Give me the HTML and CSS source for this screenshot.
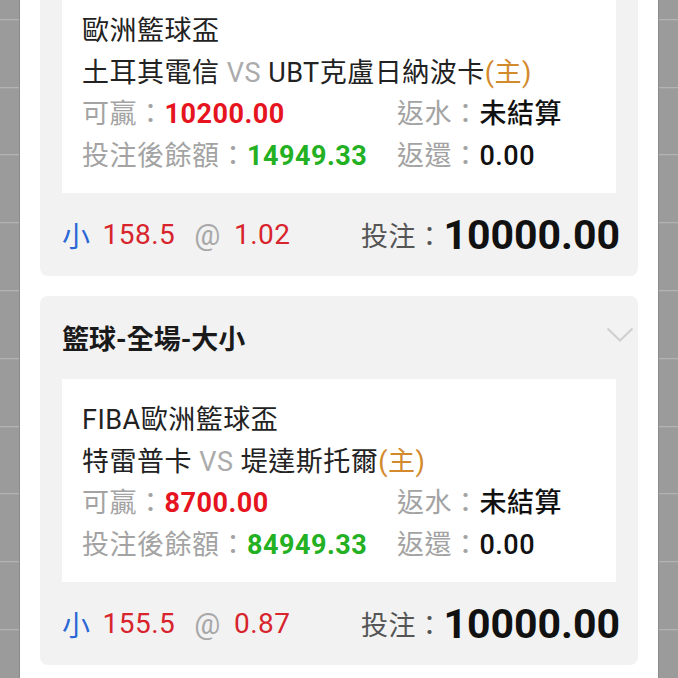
FILE: index.html
```html
<!DOCTYPE html>
<html>
<head>
    <meta charset="utf-8"/>
    <title>注單</title>
    <link rel="stylesheet" href="styles.css">
</head>
<body>
<div class="page">
    <div class="strip strip-left"></div>
    <div class="main">
        <div class="list">
            <div class="card">
                <div class="card-head">
                    <span class="title">籃球-全場-大小</span>
                    <svg class="arrow" width="28" height="16" viewBox="0 0 28 16"><polyline points="1.5,1.5 14,13.5 26.5,1.5" fill="none" stroke="#cfcfcf" stroke-width="2"/></svg>
                </div>
                <div class="detail">
                    <p>歐洲籃球盃</p>
                    <p>土耳其電信 <span class="vs">VS</span> UBT克盧日納波卡<span class="home">(主)</span></p>
                    <div class="stats">
                        <div><span class="label">可贏：</span><span class="win">10200.00</span></div>
                        <div><span class="label">返水：</span><span class="val">未結算</span></div>
                        <div><span class="label">投注後餘額：</span><span class="rest">14949.33</span></div>
                        <div><span class="label">返還：</span><span class="val">0.00</span></div>
                    </div>
                </div>
                <div class="bet">
                    <div class="odds">
                        <span class="pick">小</span><span class="num">158.5</span><span class="at">@</span><span class="num">1.02</span>
                    </div>
                    <div class="stake"><span class="stake-label">投注：</span><span class="stake-num">10000.00</span></div>
                </div>
            </div>
            <div class="card">
                <div class="card-head">
                    <span class="title">籃球-全場-大小</span>
                    <svg class="arrow" width="28" height="16" viewBox="0 0 28 16"><polyline points="1.5,1.5 14,13.5 26.5,1.5" fill="none" stroke="#cfcfcf" stroke-width="2"/></svg>
                </div>
                <div class="detail">
                    <p>FIBA歐洲籃球盃</p>
                    <p>特雷普卡 <span class="vs">VS</span> 堤達斯托爾<span class="home">(主)</span></p>
                    <div class="stats">
                        <div><span class="label">可贏：</span><span class="win">8700.00</span></div>
                        <div><span class="label">返水：</span><span class="val">未結算</span></div>
                        <div><span class="label">投注後餘額：</span><span class="rest">84949.33</span></div>
                        <div><span class="label">返還：</span><span class="val">0.00</span></div>
                    </div>
                </div>
                <div class="bet">
                    <div class="odds">
                        <span class="pick">小</span><span class="num">155.5</span><span class="at">@</span><span class="num">0.87</span>
                    </div>
                    <div class="stake"><span class="stake-label">投注：</span><span class="stake-num">10000.00</span></div>
                </div>
            </div>
        </div>
    </div>
    <div class="strip strip-right"></div>
</div>
</body>
</html>
```

FILE: styles.css
```css
* {
    margin:0;
    padding:0;
    box-sizing: border-box;
}
body {
    font-family: Roboto, "Noto Sans CJK TC", sans-serif;
    font-size:27px;
    letter-spacing:0.5px;
    color:#222;
    background:#fff;
    overflow: hidden;
}
.page {
    display: flex;
    height:678px;
}
.strip {
    width:20px;
    background: repeating-linear-gradient(to bottom, #9b9b9b 0, #9b9b9b 66.8px, #b9b9b9 66.8px, #b9b9b9 67.8px);
    background-position: 0 -47.8px;
}
.strip-left {
    border-right:1px solid #8a8a8a;
}
.strip-right {
    border-left:1px solid #8a8a8a;
}
.main {
    flex:1;
    background:#fff;
    padding:0 20px;
    overflow: hidden;
}
.list {
    display: flex;
    flex-direction: column;
    gap:20px;
    margin-top:-93px;
}
.card {
    background:#f2f2f2;
    border-radius:8px;
    padding:0 22px;
}
.card-head {
    height:83px;
    display: flex;
    align-items: center;
    justify-content: space-between;
    margin-right:-18px;
}
.title {
    font-weight:bold;
    color:#1a1a1a;
    letter-spacing:0;
}
.arrow {
    display: block;
    margin-top:-6px;
}
.detail {
    background:#fff;
    padding:21px 20px 16px;
    line-height:41.5px;
}
.vs {
    color:#ababab;
}
.home {
    color:#d38a2c;
}
.stats {
    display: grid;
    grid-template-columns: 315px 1fr;
}
.label {
    color:#a3a3a3;
}
.win {
    color:#e5141e;
    font-weight:bold;
}
.rest {
    color:#23b022;
    font-weight:bold;
}
.val {
    color:#111;
    font-weight:500;
}
.bet {
    height:83px;
    display: flex;
    align-items: center;
    justify-content: space-between;
    margin-right:-4px;
}
.odds {
    display: flex;
    align-items: center;
    font-size:28px;
}
.pick {
    color:#2b67d6;
    margin-right:12px;
}
.num {
    color:#d8242c;
    margin-right:19px;
}
.at {
    color:#a8a8a8;
    font-size:29px;
    margin-right:13px;
}
.stake {
    display: flex;
    align-items: center;
}
.stake-label {
    color:#555;
}
.stake-num {
    font-size:41px;
    font-weight:bold;
    letter-spacing:0;
    color:#111;
}
```
